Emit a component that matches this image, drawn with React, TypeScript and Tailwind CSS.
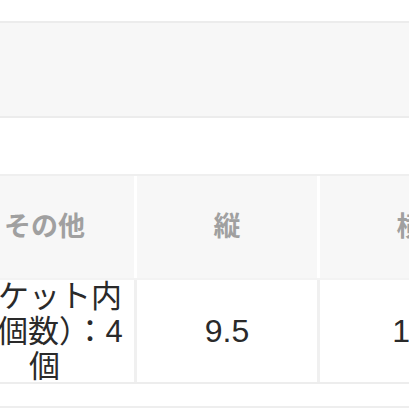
export default function App() {
  const font = { fontFamily: '"Liberation Sans", "Noto Sans CJK JP", sans-serif' };
  return (
    <div className="w-[409px] h-[409px] bg-white overflow-hidden relative" style={font}>
      <div className="h-[21px]" />
      <div className="h-[97px] bg-[#f7f7f7] border-y-2 border-[#ececec]" />
      <div className="h-[56px]" />
      <div className="border-t-2 border-[#efefef] border-b-2 border-b-[#ededed]">
        <div className="flex ml-[-45px] w-[600px] h-[102px]">
          <div className="w-[179px] bg-[#f7f7f7] flex items-center justify-center text-[27px] font-bold text-[#a0a0a0]">その他</div>
          <div className="w-[3px] bg-white" />
          <div className="w-[180px] bg-[#f7f7f7] flex items-center justify-center text-[27px] font-bold text-[#a0a0a0]">縦</div>
          <div className="w-[3px] bg-white" />
          <div className="w-[180px] bg-[#f7f7f7] flex items-center justify-center text-[27px] font-bold text-[#a0a0a0]">横</div>
        </div>
        <div className="h-[2px] bg-[#f3f3f3]" />
        <div className="flex ml-[-45px] w-[600px] h-[102px]">
          <div className="w-[179px] flex items-center justify-center text-center text-[31px] leading-[35px] text-[#2a2a2a] whitespace-nowrap">
            <div>
              ポケット内
              <br />
              （個数）：4
              <br />
              個
            </div>
          </div>
          <div className="w-[3px] bg-[#f0f0f0]" />
          <div className="w-[180px] flex items-center justify-center text-[32px] text-[#2a2a2a]">9.5</div>
          <div className="w-[3px] bg-[#f0f0f0]" />
          <div className="w-[180px] flex items-center justify-center text-[32px] text-[#2a2a2a]">14</div>
        </div>
      </div>
      <div className="h-[22px]" />
      <div className="h-[2px] bg-[#eeeeee]" />
    </div>
  );
}
